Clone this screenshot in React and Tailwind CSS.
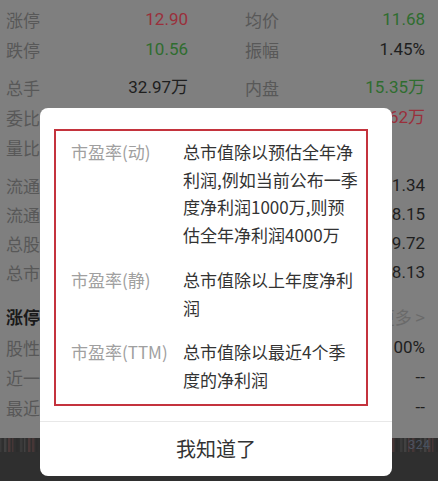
import React from "react";

const cjk = "font-['Noto_Sans_CJK_SC',sans-serif]";
const num = "font-['Roboto','Noto_Sans_CJK_SC',sans-serif]";

// 弹窗下面被遮住的那部分行情数据
const topRows = [
  [
    ["涨停", "12.90", "text-[#9a2f3b]", "均价", "11.68", "text-[#2f6d2f]"],
    ["跌停", "10.56", "text-[#2f6d2f]", "振幅", "1.45%", "text-[#1e1e1e]"],
  ],
  [
    ["总手", "32.97万", "text-[#1e1e1e]", "内盘", "15.35万", "text-[#2f6d2f]"],
    ["委比", "", "text-[#2f6d2f]", "", "17.62万", "text-[#9a2f3b]"],
    ["量比", "", "text-[#1e1e1e]", "", "", "text-[#1e1e1e]"],
  ],
];

const midRows = [
  ["流通股", "31.34"],
  ["流通值", "368.15"],
  ["总股本", "369.72"],
  ["总市值", "368.13"],
];

const lowRows = [
  ["股性评分", "100%"],
  ["近一年涨停", "--"],
  ["最近涨停", "--"],
];

function Row({ label, value, color, label2, value2, color2, h = "h-[30px]" }) {
  return (
    <div className={`flex items-center ${h} text-[17px]`}>
      <div className="flex w-[182px] items-center justify-between">
        <span className={`${cjk} text-[#585858]`}>{label}</span>
        <span className={`${num} ${color}`}>{value}</span>
      </div>
      <div className="ml-[57px] flex w-[180px] items-center justify-between">
        <span className={`${cjk} text-[#585858]`}>{label2}</span>
        <span className={`${num} ${color2}`}>{value2}</span>
      </div>
    </div>
  );
}

function Bars() {
  const bars = [];
  for (let i = 0; i < 110; i++) {
    const shade = ["#3a3a3a", "#463636", "#414141", "#2c2c2c", "#4a3838"][(i * 7) % 5];
    bars.push(<rect key={i} x={i * 4} y="0" width={i % 3 === 0 ? 1.5 : 2.5} height="14" fill={shade} />);
  }
  return (
    <svg width="438" height="14" viewBox="0 0 438 14" className="block">
      {bars}
    </svg>
  );
}

const entries = [
  {
    label: "市盈率(动)",
    lines: ["总市值除以预估全年净", "利润,例如当前公布一季", "度净利润1000万,则预", "估全年净利润4000万"],
  },
  { label: "市盈率(静)", lines: ["总市值除以上年度净利", "润"] },
  { label: "市盈率(TTM)", lines: ["总市值除以最近4个季", "度的净利润"] },
];

export default function App() {
  return (
    <div className="relative h-[481px] w-[438px] overflow-hidden bg-[#7f7f7f]">
      <div className="pl-[6px] pt-[5px]">
        <div>
          {topRows[0].map((r) => (
            <Row key={r[0]} label={r[0]} value={r[1]} color={r[2]} label2={r[3]} value2={r[4]} color2={r[5]} />
          ))}
        </div>
        <div className="mt-[8px]">
          {topRows[1].map((r) => (
            <Row key={r[0]} label={r[0]} value={r[1]} color={r[2]} label2={r[3]} value2={r[4]} color2={r[5]} />
          ))}
        </div>
        <div className="mt-[8px]">
          {midRows.map((r) => (
            <div key={r[0]} className="flex h-[29px] w-[419px] items-center justify-between text-[17px]">
              <span className={`${cjk} text-[#585858]`}>{r[0]}</span>
              <span className={`${num} text-[#1e1e1e]`}>{r[1]}</span>
            </div>
          ))}
        </div>
        <div className={`mt-[14px] flex h-[32px] w-[419px] items-center justify-between text-[17px] ${cjk}`}>
          <span className="font-bold text-[#1a1a1a]">涨停分析</span>
          <span className="text-[#6a6a6a]">更多 &gt;</span>
        </div>
        {lowRows.map((r) => (
          <div key={r[0]} className="flex h-[30px] w-[419px] items-center justify-between text-[17px]">
            <span className={`${cjk} text-[#585858]`}>{r[0]}</span>
            <span className={`${num} text-[#1e1e1e]`}>{r[1]}</span>
          </div>
        ))}
      </div>

      <div className="mt-[15px] h-[60px] bg-[#2f2f2f]">
        <div className="relative">
          <Bars />
          <span className={`absolute right-[8px] top-[-3px] text-[13px] text-[#4a5260] ${num}`}>324</span>
        </div>
      </div>

      <div className="absolute left-[40px] top-[108px] w-[352px] rounded-lg bg-white">
        <div className="ml-[14px] mt-[21px] w-[314px] border-2 border-[#c4333d] pb-[11px] pl-[15px] pt-[7px]">
          {entries.map((e, i) => (
            <div key={e.label} className={`flex text-[17px] leading-[27.5px] ${cjk} ${i === 1 ? "mt-[18px]" : ""} ${i === 2 ? "mt-[17px]" : ""}`}>
              <div className="w-[112px] shrink-0 text-[#a0a0a0]">{e.label}</div>
              <div className="whitespace-nowrap text-[#333333]">
                {e.lines.map((l) => (
                  <div key={l}>{l}</div>
                ))}
              </div>
            </div>
          ))}
        </div>
        <div className="mt-[15px] border-t border-[#e8e8e8]">
          <div className={`flex h-[54px] items-center justify-center text-[20px] text-[#333333] ${cjk}`}>我知道了</div>
        </div>
      </div>
    </div>
  );
}
